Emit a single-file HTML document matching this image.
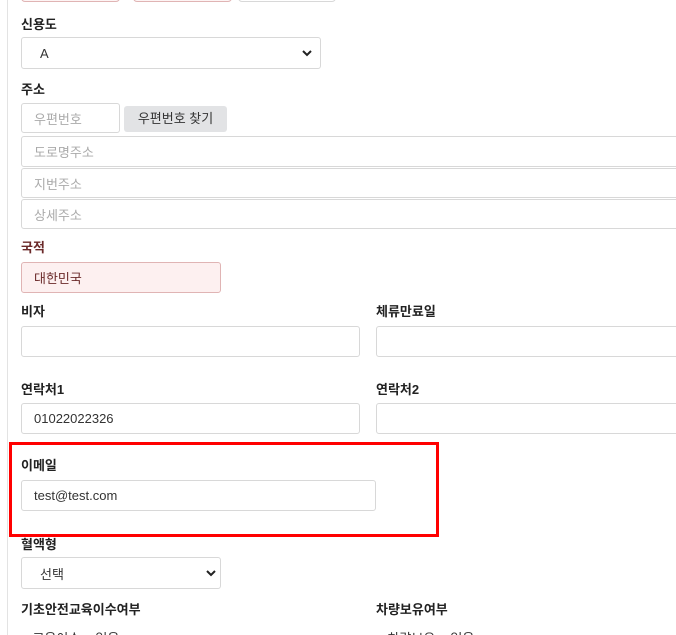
<!DOCTYPE html>
<html><head><meta charset="utf-8"><style>
html,body{margin:0;width:676px;height:635px;overflow:hidden}
body{background:#fff;position:relative;font-family:"Liberation Sans","Noto Sans CJK KR",sans-serif;font-size:13px;color:#212529}
.a{position:absolute}
.l{position:absolute;font-weight:bold;font-size:13px;color:#222;line-height:16px}
.i{position:absolute;box-sizing:border-box;border:1px solid #d8d8d8;border-radius:3px;background:#fff;padding-left:12px;display:flex;align-items:center;color:#333}
.ph{color:#aaa}
.chev{position:absolute;right:8px;top:50%;margin-top:-4px}
</style></head><body>
<div class="a" style="left:7px;top:0;width:1px;height:635px;background:#e3e3e3"></div>
<div class="a" style="left:21px;top:-28px;width:99px;height:30px;border:1px solid #e0b4b4;border-radius:4px;box-sizing:border-box;background:#fdf4f4"></div>
<div class="a" style="left:133px;top:-28px;width:99px;height:30px;border:1px solid #e0b4b4;border-radius:4px;box-sizing:border-box;background:#fdf4f4"></div>
<div class="a" style="left:238px;top:-28px;width:98px;height:30px;border:1px solid #d8d8d8;border-radius:4px;box-sizing:border-box"></div>

<div class="l" style="left:21px;top:17px">신용도</div>
<div class="i" style="left:21px;top:37px;width:300px;height:32px;padding-left:18px">A<svg class="chev" width="10" height="8" viewBox="0 0 10 8"><path d="M1 2l4 4 4-4" stroke="#222" stroke-width="2" fill="none"/></svg></div>

<div class="l" style="left:21px;top:82px">주소</div>
<div class="i ph" style="left:21px;top:103px;width:99px;height:30px">우편번호</div>
<div class="a" style="left:124px;top:106px;width:103px;height:26px;background:#e2e3e5;border-radius:3px;text-align:center;line-height:26px;color:#333">우편번호 찾기</div>
<div class="i ph" style="left:21px;top:136px;width:670px;height:31px">도로명주소</div>
<div class="i ph" style="left:21px;top:168px;width:670px;height:30px">지번주소</div>
<div class="i ph" style="left:21px;top:199px;width:670px;height:30px">상세주소</div>

<div class="l" style="left:21px;top:240px;color:#6b2a2a">국적</div>
<div class="i" style="left:21px;top:262px;width:200px;height:31px;background:#fdf0f0;border-color:#e0b4b4;color:#6b2a2a">대한민국</div>

<div class="l" style="left:21px;top:304px">비자</div>
<div class="i" style="left:21px;top:326px;width:339px;height:31px"></div>
<div class="l" style="left:376px;top:304px">체류만료일</div>
<div class="i" style="left:376px;top:326px;width:320px;height:31px"></div>

<div class="l" style="left:21px;top:382px">연락처1</div>
<div class="i" style="left:21px;top:403px;width:339px;height:31px">01022022326</div>
<div class="l" style="left:376px;top:382px">연락처2</div>
<div class="i" style="left:376px;top:403px;width:320px;height:31px"></div>

<div class="a" style="left:9px;top:442px;width:430px;height:95px;border:3px solid #f00;box-sizing:border-box"></div>
<div class="l" style="left:21px;top:458px">이메일</div>
<div class="i" style="left:21px;top:480px;width:355px;height:31px">test@test.com</div>

<div class="l" style="left:21px;top:537px">혈액형</div>
<div class="i" style="left:21px;top:557px;width:200px;height:32px;padding-left:18px">선택<svg class="chev" style="right:4px" width="10" height="8" viewBox="0 0 10 8"><path d="M1 2l4 4 4-4" stroke="#222" stroke-width="2" fill="none"/></svg></div>

<div class="l" style="left:21px;top:602px">기초안전교육이수여부</div>
<div class="l" style="left:376px;top:602px">차량보유여부</div>
<div class="a" style="left:21px;top:628px;color:#333">● 교육이수 ● 없음</div>
<div class="a" style="left:376px;top:628px;color:#333">● 차량보유 ● 없음</div>
</body></html>
